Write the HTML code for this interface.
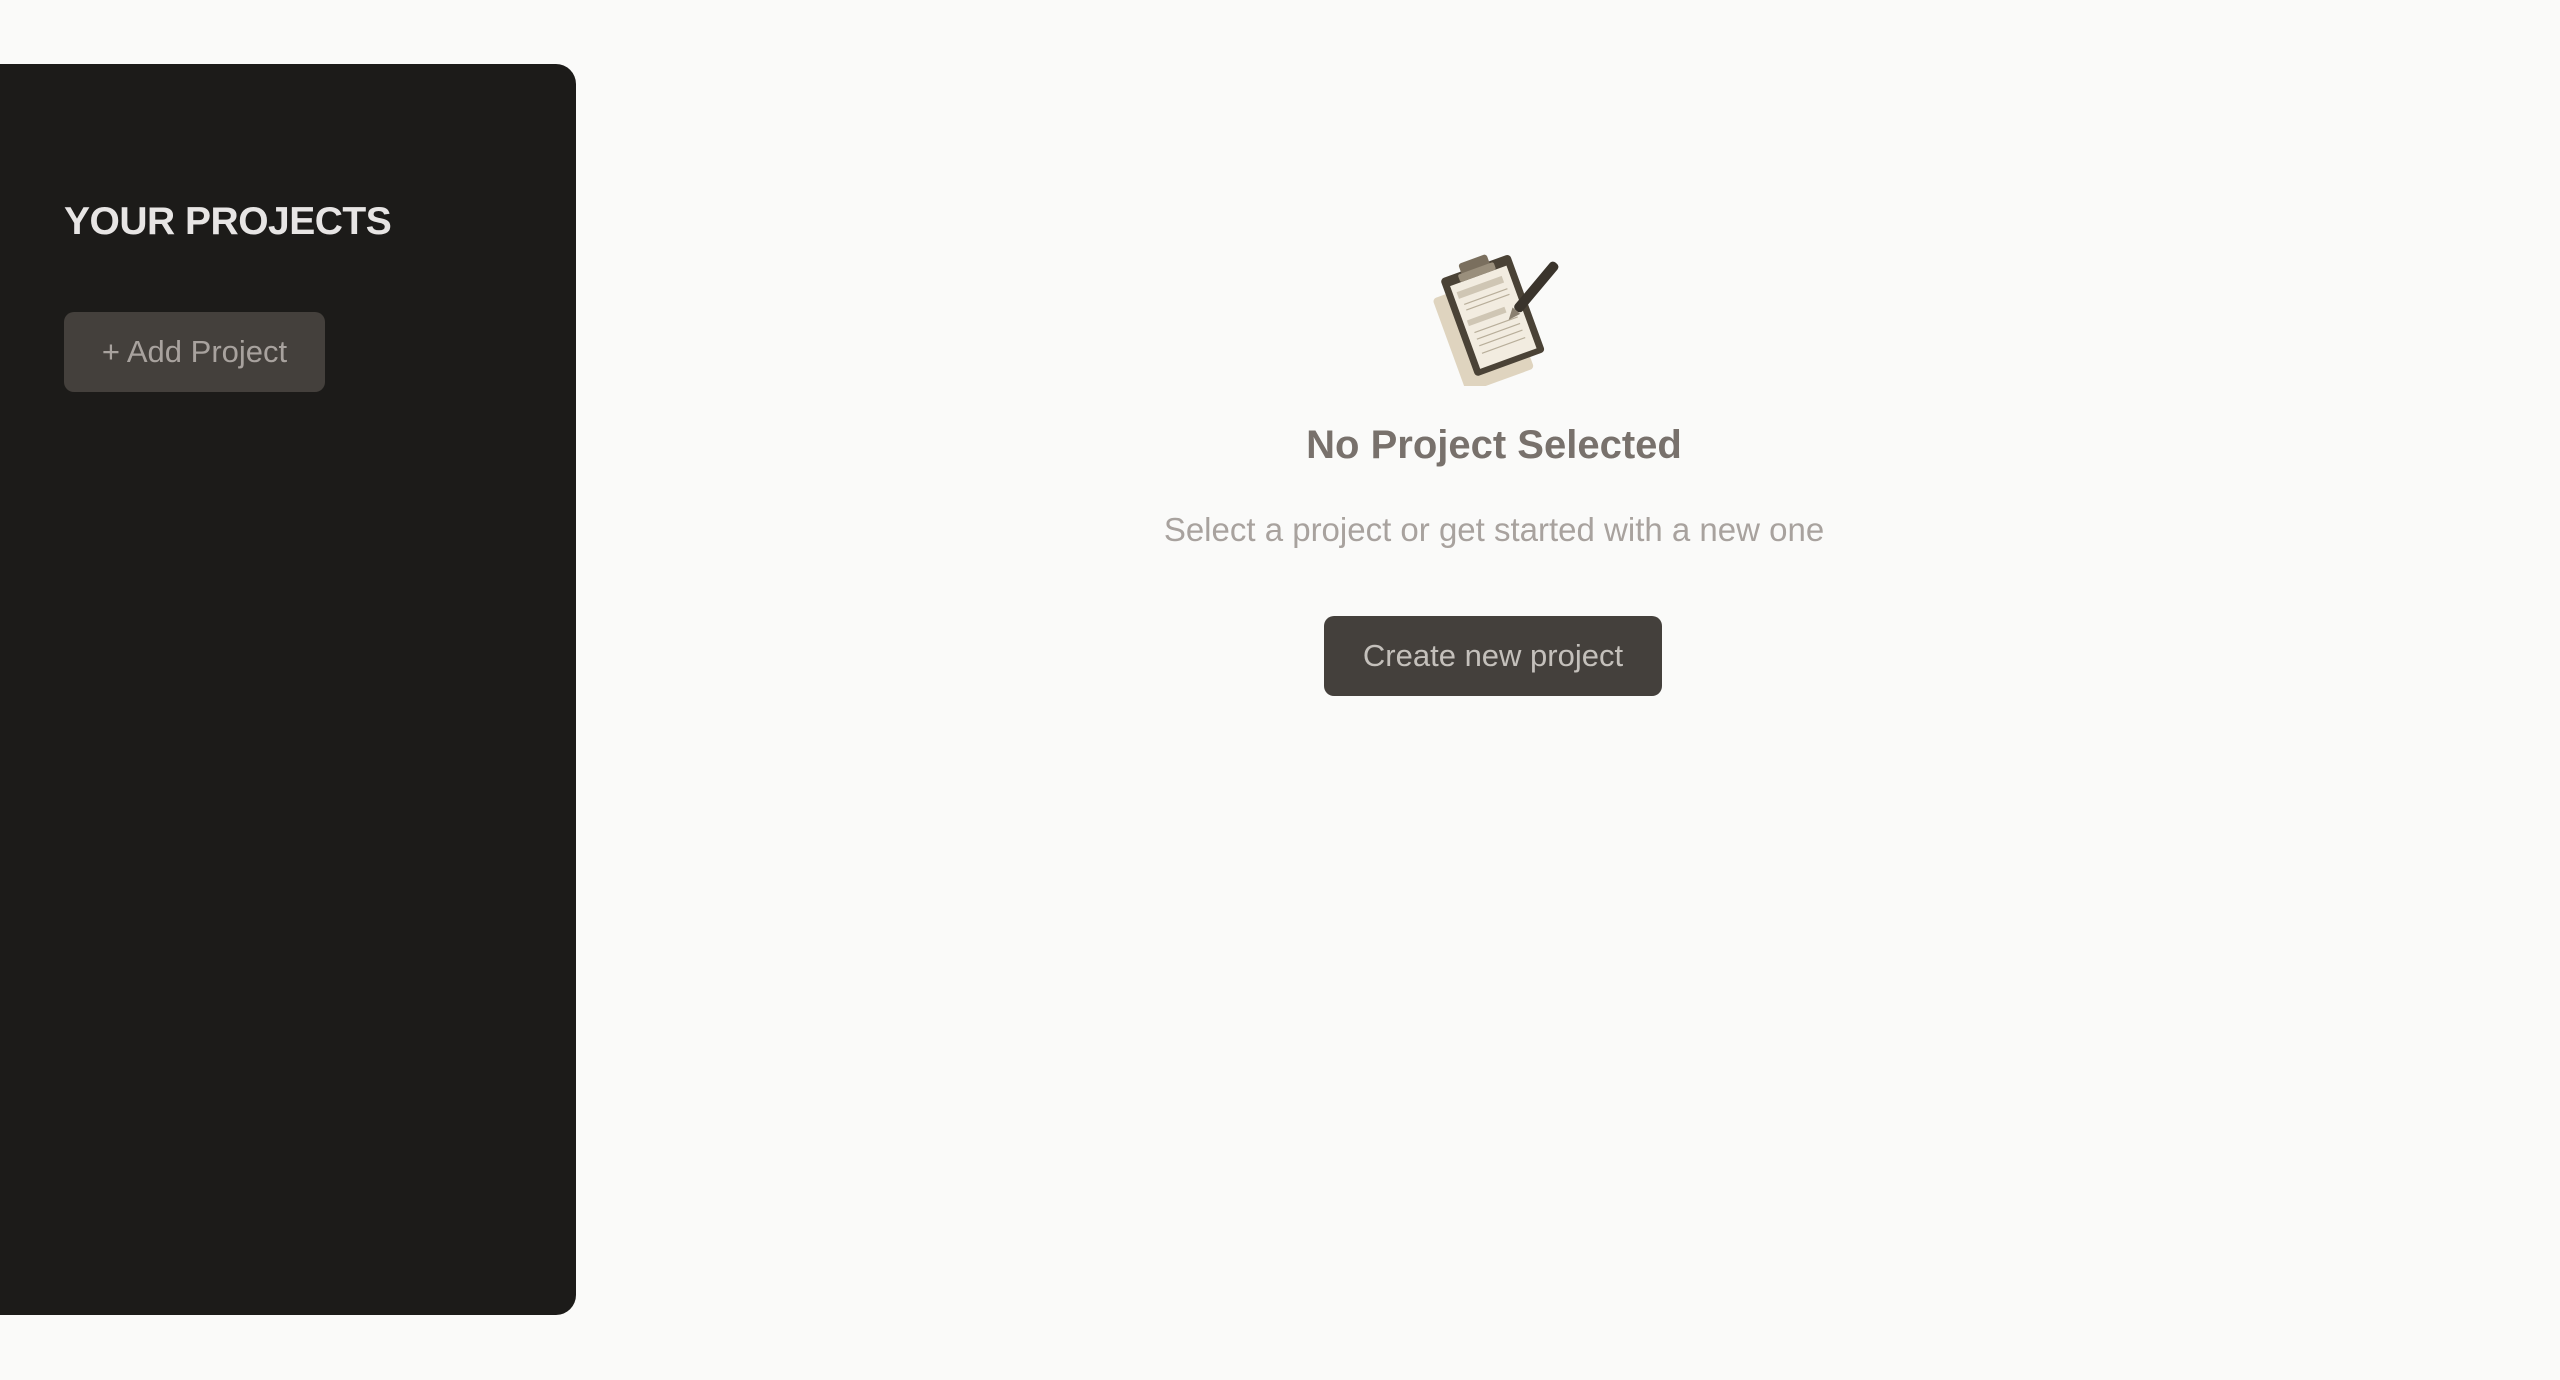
<!DOCTYPE html>
<html><head><meta charset="utf-8"><style>
html,body{margin:0;padding:0;width:2560px;height:1380px;background:#fafaf9;font-family:"Liberation Sans",sans-serif;overflow:hidden;position:relative}
.side{position:absolute;left:0;top:64px;width:576px;height:1251px;background:#1c1b19;border-radius:0 20px 20px 0}
.side h2{position:absolute;left:64px;top:136px;margin:0;font-size:39px;font-weight:bold;color:#e7e5e4;letter-spacing:-0.5px}
.add{position:absolute;left:64px;top:248px;width:261px;height:80px;background:#44403c;border-radius:10px;color:#a8a29e;font-size:31px;line-height:80px;text-align:center}
.c{position:absolute;left:1094px;width:800px;text-align:center}
.t{top:423px;font-size:40px;font-weight:bold;color:#78716c}
.s{top:511px;font-size:33px;color:#a8a29e}
.btn{position:absolute;left:1324px;top:616px;width:338px;height:80px;background:#44403c;border-radius:10px;color:#c4c0bb;font-size:31px;line-height:80px;text-align:center}
</style></head><body>
<div class="side"><h2>YOUR PROJECTS</h2><div class="add">+ Add Project</div></div>
<svg style="position:absolute;left:1410px;top:236px" width="160" height="150" viewBox="0 0 160 150">
<g transform="rotate(-20 80 75)">
<rect x="38" y="38" width="72" height="100" rx="4" fill="#d8cbb0" opacity="0.8" transform="translate(-8,6)"/>
<rect x="44" y="28" width="74" height="104" rx="4" fill="#4a4236"/>
<rect x="51" y="38" width="60" height="88" fill="#f2ece0"/>
<rect x="55" y="46" width="48" height="7" fill="#cfc6b4"/>
<rect x="55" y="76" width="40" height="6" fill="#cfc6b4"/>
<g stroke="#b8ae9a" stroke-width="1.2"><line x1="58" y1="60" x2="104" y2="60"/><line x1="58" y1="66" x2="104" y2="66"/><line x1="58" y1="90" x2="104" y2="90"/><line x1="58" y1="97" x2="104" y2="97"/><line x1="58" y1="104" x2="104" y2="104"/><line x1="58" y1="112" x2="104" y2="112"/></g>
<rect x="66" y="20" width="30" height="14" rx="3" fill="#7a6f5e"/>
<rect x="62" y="30" width="38" height="8" rx="2" fill="#9a8f7c"/>
</g>
<g transform="rotate(40 120 60)"><rect x="114" y="18" width="10" height="62" rx="4" fill="#3a342c"/><polygon points="114,80 124,80 119,92" fill="#8a8070"/></g>
</svg>
<div class="c t">No Project Selected</div>
<div class="c s">Select a project or get started with a new one</div>
<div class="btn">Create new project</div>
</body></html>
